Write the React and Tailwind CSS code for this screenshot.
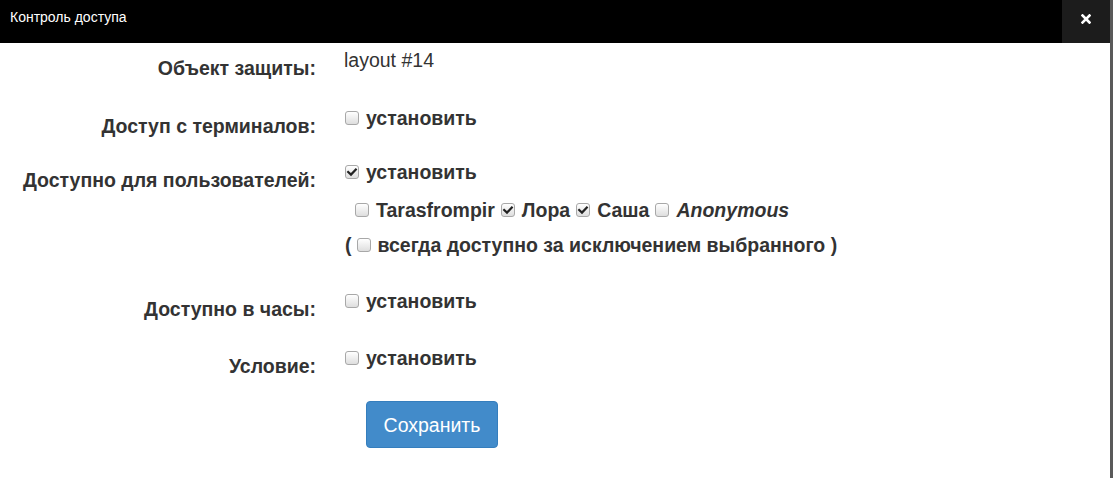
import React from "react";

function Box({ checked }) {
  return (
    <span className="inline-block relative w-[14px] h-[14px] rounded-[3px] border border-[#a8a8a8] bg-gradient-to-b from-white to-[#dedede] shrink-0">
      {checked && (
        <svg viewBox="0 0 14 14" className="absolute -left-px -top-px w-[14px] h-[14px]">
          <path d="M3.2 7 L6 9.6 L10.8 4.6" fill="none" stroke="#222" strokeWidth="2.2" strokeLinecap="square" />
        </svg>
      )}
    </span>
  );
}

function Check({ checked, children, className = "" }) {
  return (
    <span className={"inline-flex items-center " + className}>
      <Box checked={checked} />
      <span className="ml-[7px]">{children}</span>
    </span>
  );
}

function Row({ label, children, className = "" }) {
  return (
    <div className={"flex items-start " + className}>
      <div className="w-[316px] shrink-0 text-right font-bold pt-[8px] leading-[20px]">{label}</div>
      <div className="pl-[29px] leading-[20px]">{children}</div>
    </div>
  );
}

export default function App() {
  return (
    <div className="w-[1113px] h-[478px] flex bg-white text-[#333] text-[19.5px] overflow-hidden" style={{ fontFamily: '"Liberation Sans", Arial, sans-serif' }}>
      <div className="flex-1 flex flex-col">
        <div className="h-[43px] bg-black flex items-start justify-between">
          <div className="text-white text-[14px] pl-[10px] pt-[9px] leading-[16px]">Контроль доступа</div>
          <div className="w-[48px] h-[43px] bg-[#1c1c1c] flex items-start justify-center pt-[14px]">
            <svg viewBox="0 0 10 10" className="w-[10px] h-[10px]">
              <path d="M1.5 1.5 L8.5 8.5 M8.5 1.5 L1.5 8.5" stroke="white" strokeWidth="2.6" strokeLinecap="square" />
            </svg>
          </div>
        </div>
        <div className="pt-[7px]">
          <Row label="Объект защиты:">
            <span className="-ml-px">layout #14</span>
          </Row>
          <Row label="Доступ с терминалов:" className="mt-[30px]">
            <Check className="font-bold">установить</Check>
          </Row>
          <Row label="Доступно для пользователей:" className="mt-[26px]">
            <div className="font-bold">
              <Check checked>установить</Check>
              <div className="mt-[18px] pl-[10px] flex items-center">
                <Check>Tarasfrompir</Check>
                <Check checked className="ml-[6px]">Лора</Check>
                <Check checked className="ml-[6px]">Саша</Check>
                <Check className="ml-[6px]"><i>Anonymous</i></Check>
              </div>
              <div className="mt-[15px] flex items-center">
                <span>(</span>
                <Check className="ml-[5px]">всегда доступно за исключением выбранного )</Check>
              </div>
            </div>
          </Row>
          <Row label="Доступно в часы:" className="mt-[36px]">
            <Check className="font-bold">установить</Check>
          </Row>
          <Row label="Условие:" className="mt-[29px]">
            <Check className="font-bold">установить</Check>
          </Row>
          <div className="mt-[25px] pl-[366px]">
            <button className="w-[132px] h-[47px] rounded-[4px] bg-[#428bca] border border-[#357ebd] text-white text-[19.5px] leading-[20px]">Сохранить</button>
          </div>
        </div>
      </div>
      <div className="w-[3px] bg-[#5a5a5a]"></div>
    </div>
  );
}
